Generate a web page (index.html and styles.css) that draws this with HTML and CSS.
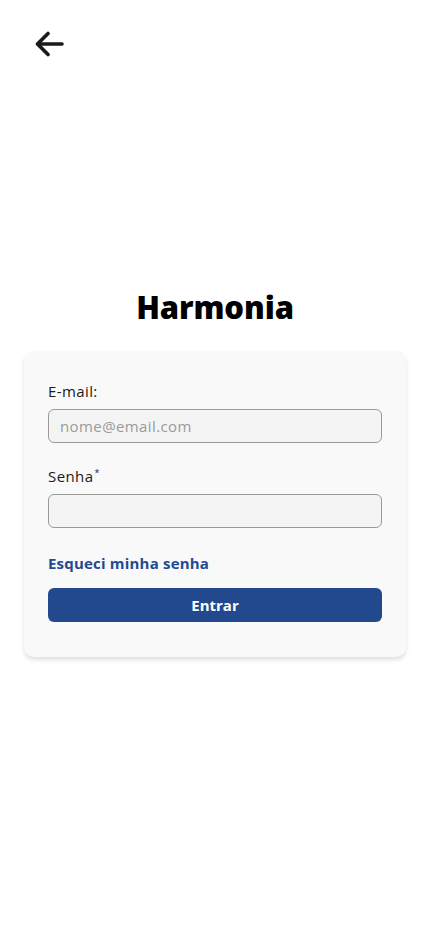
FILE: index.html
```html
<!DOCTYPE html>
<html lang="pt-BR">
<head>
<meta charset="utf-8">
<link rel="stylesheet" href="styles.css">
</head>
<body>
<header class="topbar">
  <button class="back" aria-label="Voltar">
    <svg width="30" height="26" viewBox="0 0 30 26" fill="none" stroke="#1a1a1a" stroke-width="3.6" stroke-linecap="round" stroke-linejoin="round">
      <path d="M27 13H3"/>
      <path d="M13 2.5L2.5 13L13 23.5"/>
    </svg>
  </button>
</header>
<main class="main">
  <h1 class="title">Harmonia</h1>
  <form class="card">
    <label class="label" for="email">E-mail:</label>
    <input class="input" id="email" type="email" placeholder="nome@email.com">
    <label class="label label-senha" for="senha">Senha<sup>*</sup></label>
    <input class="input" id="senha" type="password">
    <a class="forgot" href="#">Esqueci minha senha</a>
    <button class="submit" type="button">Entrar</button>
  </form>
</main>
</body>
</html>
```
FILE: styles.css
```css
* { box-sizing: border-box; }
html, body { margin: 0; padding: 0; background: #fff; }
body {
  font-family: "Open Sans", "Noto Sans", sans-serif;
  color: #1a1a1a;
  width: 430px;
  min-height: 946px;
}
.topbar {
  height: 80px;
  padding: 31px 0 0 35px;
}
.back {
  border: 0;
  background: none;
  padding: 0;
  display: block;
  width: 30px;
  height: 26px;
}
.back svg { display: block; }
.main {
  padding: 0 24px;
  display: flex;
  flex-direction: column;
}
.title {
  margin: 207px 0 0;
  text-align: center;
  font-size: 31px;
  font-weight: 800;
  line-height: 40px;
  color: #000;
  letter-spacing: -0.1px;
}
.card {
  margin-top: 24px;
  background: #f9f9f9;
  border-radius: 10px;
  box-shadow: 0 3px 4px rgba(0,0,0,0.12);
  padding: 30px 24px 35px;
  display: flex;
  flex-direction: column;
}
.label {
  font-size: 15px;
  line-height: 20px;
  color: #1a1a1a;
  margin-bottom: 8px;
  letter-spacing: 0.4px;
}
.label sup { font-size: 9px; vertical-align: 6px; line-height: 0; margin-left: 1px; }
.label-senha { margin-top: 23px; }
.input {
  height: 34px;
  border: 1px solid #9a9a9a;
  border-radius: 6px;
  background: #f4f4f4;
  padding: 0 11px;
  font-family: inherit;
  font-size: 15px;
  letter-spacing: 0.4px;
  color: #333;
  outline: none;
}
.input::placeholder { color: #9a9a9a; }
.forgot {
  margin-top: 25px;
  font-size: 15px;
  font-weight: 700;
  line-height: 20px;
  letter-spacing: 0.2px;
  color: #234a8f;
  text-decoration: none;
  align-self: flex-start;
}
.submit {
  margin-top: 15px;
  height: 34px;
  border: 0;
  border-radius: 6px;
  background: #22498e;
  color: #fff;
  font-family: inherit;
  font-size: 15px;
  font-weight: 700;
}
```
